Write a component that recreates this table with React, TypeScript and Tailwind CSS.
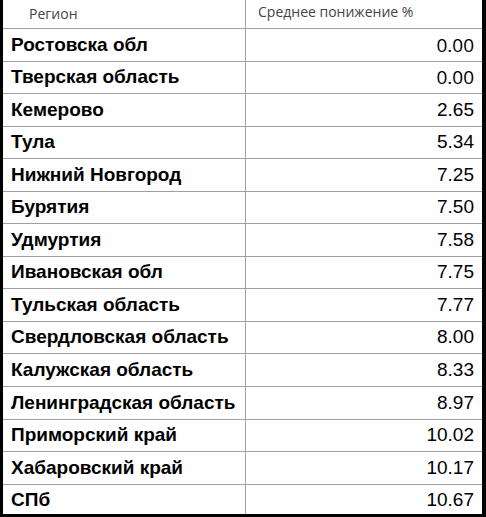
import React from "react";

const rows: [string, string][] = [
  ["Ростовска обл", "0.00"],
  ["Тверская область", "0.00"],
  ["Кемерово", "2.65"],
  ["Тула", "5.34"],
  ["Нижний Новгород", "7.25"],
  ["Бурятия", "7.50"],
  ["Удмуртия", "7.58"],
  ["Ивановская обл", "7.75"],
  ["Тульская область", "7.77"],
  ["Свердловская область", "8.00"],
  ["Калужская область", "8.33"],
  ["Ленинградская область", "8.97"],
  ["Приморский край", "10.02"],
  ["Хабаровский край", "10.17"],
  ["СПб", "10.67"],
];

export default function App() {
  return (
    <div className="w-[486px] h-[517px] bg-black overflow-hidden">
      <div className="ml-[3px] w-[479px] h-[514px] bg-white overflow-hidden">
        <div className="grid grid-cols-[243px_1fr] h-[29px] border-b border-[#a0a0a0] font-['Open_Sans',sans-serif] text-[14px] text-[#444]">
          <div className="border-r border-[#a0a0a0] pl-[26px] leading-[27px]">Регион</div>
          <div className="pl-[12px] leading-[24px]">Среднее понижение %</div>
        </div>
        {rows.map(([name, val], i) => (
          <div
            key={i}
            className="grid grid-cols-[243px_1fr] h-[32.55px] border-b border-[#a0a0a0]"
          >
            <div className="border-r border-[#a0a0a0] pl-[8px] flex items-center font-['Liberation_Sans',Arial,sans-serif] font-bold text-[19px] text-black">
              {name}
            </div>
            <div
              className={
                i < 2
                  ? "flex items-center justify-end pr-[8px] font-['Open_Sans',sans-serif] text-[19px] text-black"
                  : "flex items-center justify-end pr-[8px] font-['Liberation_Sans',Arial,sans-serif] text-[19px] text-black"
              }
            >
              {val}
            </div>
          </div>
        ))}
      </div>
    </div>
  );
}
